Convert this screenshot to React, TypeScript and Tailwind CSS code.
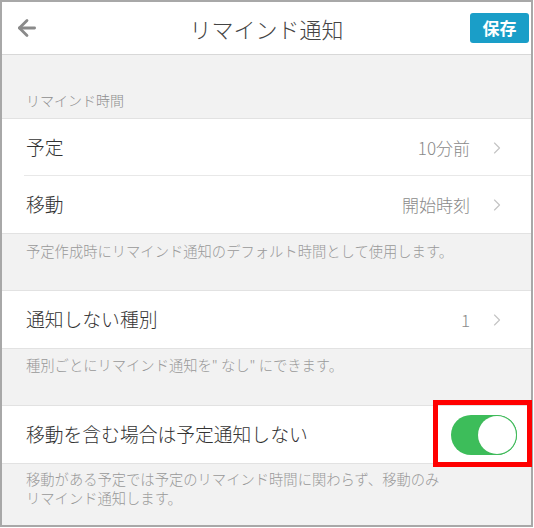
import React from 'react';
import { ArrowLeft, ChevronRight } from 'lucide-react';

const font = { fontFamily: '"Noto Sans CJK JP", "Noto Sans", sans-serif' };

interface RowProps {
  label: string;
  value?: string;
  divider?: boolean;
  children?: React.ReactNode;
}

const Row: React.FC<RowProps> = ({ label, value, divider, children }) => (
  <div className="relative flex h-[57px] items-center bg-white pl-[24px] pr-[24px]">
    <span className="flex-1 text-[18.8px] font-light text-[#333]">{label}</span>
    {value !== undefined && (
      <div className="flex items-center gap-[17px]">
        <span className="text-[17px] font-light text-[#8a8a8a]">{value}</span>
        <ChevronRight className="h-[22px] w-[20px] text-[#c4c4c4]" strokeWidth={1.4} />
      </div>
    )}
    {children}
    {divider && <div className="absolute bottom-0 left-[22px] right-0 h-px bg-[#e8e8e8]" />}
  </div>
);

const Note: React.FC<{ children: React.ReactNode; className?: string }> = ({ children, className }) => (
  <div className={`border-t border-[#e2e2e2] px-[24px] text-[14.3px] font-light leading-[19px] text-[#999] ${className ?? ''}`}>
    {children}
  </div>
);

const Toggle: React.FC<{ on: boolean }> = ({ on }) => (
  <div
    className={`flex h-[40px] w-[66px] items-center rounded-full p-[1px] ${on ? 'justify-end bg-[#3dbd5a]' : 'justify-start bg-[#e5e5e5]'}`}
  >
    <div className="h-[38px] w-[38px] rounded-full bg-white shadow-[0_0_0_1px_#41b95b]" />
  </div>
);

export default function App() {
  return (
    <div className="relative h-[528px] w-[534px] bg-white" style={font}>
      <div className="flex h-[527px] w-[533px] flex-col overflow-hidden border-2 border-[#a8a8a8] bg-[#f2f2f2]">
        {/* top bar */}
        <header className="relative flex h-[53px] shrink-0 items-center justify-center border-b border-[#d8d8d8] bg-white">
          <ArrowLeft className="absolute left-[12px] h-[26px] w-[26px] text-[#8a8a8a]" strokeWidth={2.6} />
          <h1 className="text-[22px] font-light text-[#444]">リマインド通知</h1>
          <button className="absolute right-[2px] top-[11px] h-[30px] w-[59px] rounded-[3px] bg-[#1a9ec8] text-[17px] font-bold text-white">
            保存
          </button>
        </header>

        <div className="flex h-[63px] shrink-0 items-end pb-[7px] pl-[24px] text-[14px] font-light text-[#8e8e8e]">
          リマインド時間
        </div>

        <div className="border-t border-[#e2e2e2]">
          <Row label="予定" value="10分前" divider />
          <Row label="移動" value="開始時刻" />
        </div>

        <Note className="h-[57px] shrink-0 pt-[7px]">予定作成時にリマインド通知のデフォルト時間として使用します。</Note>

        <div className="border-t border-[#e2e2e2]">
          <Row label="通知しない種別" value="1" />
        </div>

        <Note className="h-[57px] shrink-0 pt-[6px]">種別ごとにリマインド通知を" なし" にできます。</Note>

        <div className="border-t border-[#e2e2e2]">
          <Row label="移動を含む場合は予定通知しない">
            <div className="-mr-[10px]">
              <Toggle on />
            </div>
          </Row>
        </div>

        <Note className="flex-1 pt-[5px]">
          移動がある予定では予定のリマインド時間に関わらず、移動のみ
          <br />
          リマインド通知します。
        </Note>
      </div>

      {/* highlight around the switch */}
      <div className="pointer-events-none absolute left-[433px] top-[400px] h-[67px] w-[99px] border-[5px] border-[#ff0000]" />
    </div>
  );
}
